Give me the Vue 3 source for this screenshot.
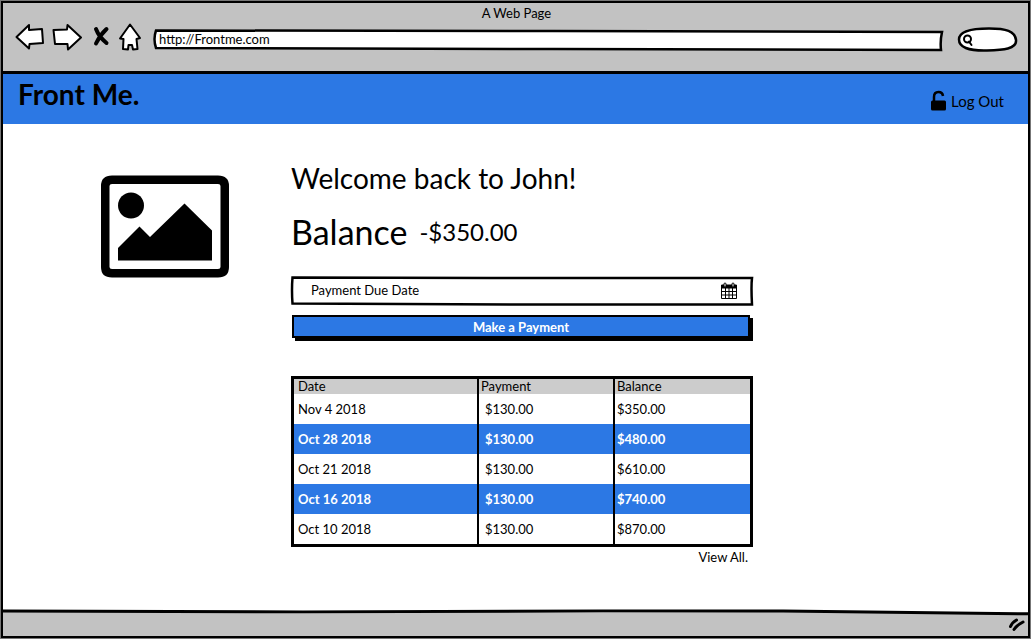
<script setup>
import { ref } from 'vue'

const address = ref('http://Frontme.com')
const search = ref('')
const dueDate = ref('Payment Due Date')
const rows = [
  { date: 'Nov 4 2018', payment: '$130.00', balance: '$350.00' },
  { date: 'Oct 28 2018', payment: '$130.00', balance: '$480.00' },
  { date: 'Oct 21 2018', payment: '$130.00', balance: '$610.00' },
  { date: 'Oct 16 2018', payment: '$130.00', balance: '$740.00' },
  { date: 'Oct 10 2018', payment: '$130.00', balance: '$870.00' }
]
</script>

<template>
  <div class="browser">
    <header class="chrome">
      <div class="title">A Web Page</div>
      <div class="toolbar">
        <nav class="nav" aria-label="Browser">
          <button type="button" aria-label="Back">
            <svg width="30" height="28" viewBox="0 0 30 28"><path d="M1.500 14 L14 2 L14 7 L27 6 L28 20 L14.500 21 L14 25.500 Z" /></svg>
          </button>
          <button type="button" aria-label="Forward">
            <svg width="30" height="28" viewBox="0 0 30 28"><path d="M1.500 7 L15 6.500 L15.500 2 L29 14.500 L16 26.500 L15.500 21 L3 21 Z" /></svg>
          </button>
          <button type="button" aria-label="Stop">
            <svg width="22" height="28" viewBox="0 0 22 28"><path class="cross" d="M7 6 Q10 14 17.500 20 M17.500 6 Q11 12 7 20.500" /></svg>
          </button>
          <button type="button" aria-label="Home">
            <svg width="24" height="28" viewBox="0 0 24 28"><path d="M12 1.500 L22 15 L18.500 16 L19.500 26 L15 26.500 L14 22 L10.500 22 L10 26.500 L5 26 L5.500 16 L2 15.500 Z" /></svg>
          </button>
        </nav>
        <div class="address">
          <svg class="sketch" viewBox="0 0 790 22" preserveAspectRatio="none" aria-hidden="true"><path d="M3 1.500 L400 2 L789 3 Q787 12 788 21 L400 20 L3 19 Q0 10 3 1.500 Z" /></svg>
          <input v-model="address" type="text" aria-label="Address" />
        </div>
        <div class="search">
          <svg class="sketch" viewBox="0 0 60 25" preserveAspectRatio="none" aria-hidden="true"><path d="M1 12.500 C1 3 17 1.500 31 1.500 C48 1.500 57 4 58 13 C59 22 45 23 29 23.500 C10 24 1 20 1 12.500 Z" /></svg>
          <svg class="lens" width="12" height="13" viewBox="0 0 12 13" aria-hidden="true"><circle cx="5.500" cy="5" r="3.500" /><path d="M7 7.500 L9.500 11" /></svg>
          <input v-model="search" type="text" aria-label="Search" />
        </div>
      </div>
    </header>

    <div class="brandbar">
      <h1>Front Me.</h1>
      <a class="logout" href="#">
        <svg width="17" height="22" viewBox="0 0 17 22" aria-hidden="true"><path d="M4 11 V7 Q4 2 8.500 2 Q12.500 2 13 6" /><rect x="1" y="10.500" width="15" height="10" rx="1.500" /></svg>
        <span>Log Out</span>
      </a>
    </div>

    <main class="page">
      <svg class="picture" viewBox="0 0 128 103" role="img" aria-label="Profile picture">
        <path fill-rule="evenodd" d="M11 0.500 H117 Q128 0.500 128 11 V92 Q128 102.500 117 102.500 H11 Q0 102.500 0 92 V11 Q0 0.500 11 0.500 Z M11 9 Q8.500 9 8.500 11 V92 Q8.500 94 11 94 H117 Q119.500 94 119.500 92 V11 Q119.500 9 117 9 Z" />
        <circle cx="30" cy="30.500" r="13" />
        <path d="M17 85.500 V73 L38.500 51.500 L49 62 L83.500 28.500 L111 55.500 V85.500 Z" />
      </svg>

      <section class="account">
        <h2>Welcome back to John!</h2>
        <p class="balance"><span>Balance</span><strong>-$350.00</strong></p>

        <div class="due">
          <svg class="sketch" viewBox="0 0 462 30" preserveAspectRatio="none" aria-hidden="true"><path d="M1.500 1.500 L200 2 L461 2 Q460 10 461 28.500 L220 28.500 L1.500 27.500 Q0.500 14 1.500 1.500 Z" /></svg>
          <input v-model="dueDate" type="text" aria-label="Payment due date" />
          <button type="button" aria-label="Open calendar">
            <svg width="16" height="18" viewBox="0 0 16 18" aria-hidden="true"><path class="cal-head" d="M0.500 3 H15.500 V6 H0.500 Z" /><path d="M0.500 3 V16.500 H15.500 V3 M0.500 9.500 H15.500 M0.500 13 H15.500 M4.500 6 V16.500 M8 6 V16.500 M11.500 6 V16.500" /><rect x="3" y="1" width="2" height="4" rx="1" /><rect x="11" y="1" width="2" height="4" rx="1" /></svg>
          </button>
        </div>

        <button class="pay" type="button">Make a Payment</button>

        <table>
          <colgroup><col class="c-date" /><col class="c-pay" /><col /></colgroup>
          <thead>
            <tr><th scope="col">Date</th><th scope="col">Payment</th><th scope="col">Balance</th></tr>
          </thead>
          <tbody>
            <tr v-for="row in rows" :key="row.date">
              <td>{{ row.date }}</td><td class="amount">{{ row.payment }}</td><td>{{ row.balance }}</td>
            </tr>
          </tbody>
        </table>
        <a class="all" href="#">View All.</a>
      </section>
    </main>

    <footer class="status">
      <svg class="edge" viewBox="0 0 1025 28" preserveAspectRatio="none" aria-hidden="true"><path d="M0 2 L300 3 L600 2 L780 2 L1025 5 V28 H0 Z" /><path class="line" d="M0 2 L300 3 L600 2 L780 2 L1025 5" /></svg>
      <svg class="grip" width="18" height="16" viewBox="0 0 18 16" aria-hidden="true"><path d="M2.500 9.500 Q4 5.500 8.500 3 M6 12.500 Q9 8 15 5" /></svg>
    </footer>
  </div>
</template>

<style>
body {
  margin: 0;
  background: #fff;
}
</style>

<style scoped>
* {
  box-sizing: border-box;
}
.browser {
  display: flex;
  flex-direction: column;
  min-height: 100vh;
  border: 3px solid #000;
  outline: 1px solid #777;
  outline-offset: -1px;
  font-family: Lato, "Liberation Sans", sans-serif;
  font-size: 13px;
  line-height: 16px;
  color: #000;
}
button,
input {
  padding: 0;
  border: 0;
  background: none;
  font: inherit;
  color: inherit;
}
a {
  color: inherit;
  text-decoration: none;
}
svg {
  display: block;
}
.chrome {
  padding: 2px 10px 0 12px;
  height: 71px;
  background: #c2c2c2;
  border-bottom: 3px solid #000;
}
.title {
  text-align: center;
}
.toolbar {
  display: flex;
  align-items: center;
}
.nav {
  display: flex;
  align-items: center;
  gap: 7px;
  margin-right: 11px;
}
.nav path {
  fill: #fff;
  stroke: #000;
  stroke-width: 2;
  stroke-linejoin: round;
}
.nav .cross {
  fill: none;
  stroke-width: 4;
  stroke-linecap: round;
}
.address {
  position: relative;
  flex: 1;
  height: 22px;
  margin-top: 6px;
}
.sketch {
  position: absolute;
  inset: 0;
  width: 100%;
  height: 100%;
  overflow: visible;
}
.sketch path {
  fill: #fff;
  stroke: #000;
  stroke-width: 2.5;
}
.address input {
  position: relative;
  display: block;
  width: 100%;
  height: 20px;
  padding: 0 6px;
}
.search {
  position: relative;
  width: 60px;
  height: 25px;
  margin: 6px 0 0 15px;
}
.lens {
  position: absolute;
  left: 4px;
  top: 7px;
  fill: none;
  stroke: #000;
  stroke-width: 2;
  stroke-linecap: round;
}
.search input {
  position: relative;
  width: 100%;
  height: 25px;
  padding: 0 8px 0 18px;
}
.brandbar {
  display: flex;
  justify-content: space-between;
  height: 50px;
  padding: 0 24px 0 15px;
  background: #2c78e4;
}
h1 {
  margin: 0;
  font-size: 28px;
  font-weight: 700;
  line-height: 40px;
}
.logout {
  display: flex;
  align-items: center;
  gap: 4px;
  padding-top: 3px;
  font-size: 15px;
}
.logout path {
  fill: none;
  stroke: #000;
  stroke-width: 2.5;
}
.page {
  flex: 1;
  display: grid;
  grid-template-columns: 98fr 128px 62px 462fr 275fr;
  align-content: start;
}
.picture {
  grid-column: 2;
  width: 100%;
  margin-top: 51px;
}
.account {
  grid-column: 4;
  display: flex;
  flex-direction: column;
  padding-top: 36px;
}
h2 {
  margin: 0;
  font-size: 28px;
  font-weight: 400;
  line-height: 36px;
  white-space: nowrap;
}
.balance {
  display: flex;
  align-items: center;
  gap: 12px;
  margin: 16px 0 0;
  font-size: 34px;
  line-height: 40px;
}
.balance strong {
  font-size: 24px;
  font-weight: 400;
}
.due {
  position: relative;
  display: flex;
  align-items: center;
  height: 30px;
  margin-top: 24px;
}
.due input {
  position: relative;
  flex: 1;
  min-width: 0;
  height: 26px;
  padding: 0 0 2px 20px;
}
.due button {
  position: relative;
  margin-right: 16px;
}
.due button path {
  fill: none;
  stroke: #000;
}
.due button .cal-head {
  fill: #000;
}
.due button rect {
  fill: #fff;
  stroke: #000;
}
.pay {
  height: 23px;
  margin: 9px 3px 0 1px;
  border: 2px solid #000;
  background: #2c78e4;
  box-shadow: 3px 3px 0 #000;
  color: #fff;
  font-weight: 700;
}
table {
  width: 100%;
  margin-top: 38px;
  border: 3px solid #000;
  border-spacing: 0;
  table-layout: fixed;
}
.c-date {
  width: 185px;
}
.c-pay {
  width: 136px;
}
th,
td {
  height: 30px;
  padding: 0 0 0 4px;
  text-align: left;
}
th {
  height: 15px;
  padding-left: 2px;
  background: #ccc;
  font-weight: 400;
  line-height: 15px;
}
th:first-child {
  padding-left: 4px;
}
td:last-child {
  padding-left: 2px;
}
.amount {
  padding-left: 6px;
}
th:not(:last-child),
td:not(:last-child) {
  border-right: 2px solid #000;
}
tbody tr:nth-child(even) {
  background: #2c78e4;
  color: #fff;
  font-weight: 700;
}
.all {
  align-self: flex-end;
  margin: 2px 5px 0 0;
}
.status {
  position: relative;
  display: flex;
  align-items: center;
  justify-content: flex-end;
  height: 27px;
}
.edge {
  position: absolute;
  inset: 0;
  width: 100%;
  height: 100%;
  fill: #c2c2c2;
}
.edge .line {
  fill: none;
  stroke: #000;
  stroke-width: 3;
}
.grip {
  position: relative;
  margin: 4px 2px 0 0;
  fill: none;
  stroke: #000;
  stroke-width: 3;
  stroke-linecap: round;
}
</style>
